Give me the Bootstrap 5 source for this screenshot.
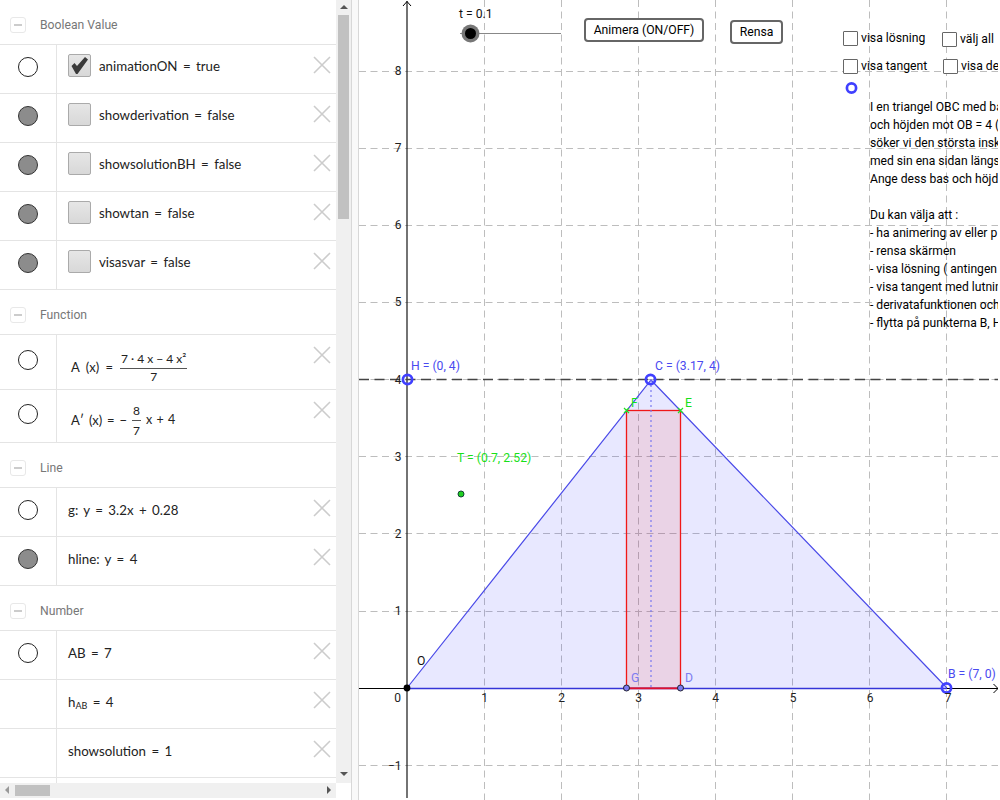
<!DOCTYPE html>
<html lang="sv">
<head>
<meta charset="utf-8">
<title>GeoGebra</title>
<link rel="stylesheet" href="https://cdn.jsdelivr.net/npm/bootstrap@5.3.0/dist/css/bootstrap.min.css">
<style>
html,body{height:800px;overflow:hidden;background:#fff;}
body{font-family:Roboto,"Liberation Sans",sans-serif;color:#000;}
.ggb-app{width:1000px;height:800px;}
.algebra-pane{width:351px;height:800px;flex:none;position:relative;}
.algebra-list{width:336px;height:783px;overflow:hidden;}
.group-head{height:45px;color:#777;font-size:12.2px;padding:6px 0 0 10px;gap:14px;border-bottom:1px solid #e4e4e4;}
.minus-box{width:16px;height:16px;border:1px solid #e8e8e8;border-radius:3px;position:relative;flex:none;}
.minus-box::after{content:"";position:absolute;left:3px;right:3px;top:6px;height:2px;background:#ccc;}
.alg-row{height:49px;border-bottom:1px solid #e4e4e4;}
.alg-row.tall-a{height:55px;}
.alg-row.tall-b{height:53px;}
.marble-cell{width:57px;flex:none;border-right:1px solid #e4e4e4;padding-top:12px;}
.tall-a .marble-cell{padding-top:15px;}
.tall-b .marble-cell{padding-top:14px;}
.marble{display:block;width:20px;height:20px;border-radius:50%;border:1px solid #222;margin-left:18px;background:#fff;}
.marble.on{background:#8c8c8c;border-color:#333;}
.expr{flex:1;padding-left:11px;font-size:13.3px;word-spacing:2px;color:#222;padding-top:9px;gap:8px;white-space:nowrap;position:relative;font-family:Lato,Roboto,sans-serif;}
.expr-text{margin-top:3px;}
.expr-plain{margin-top:4px;}
.tall-a .expr{padding-top:11px;gap:7px;}
.tall-b .expr{gap:5px;}
.fake-check{width:23px;height:23px;flex:none;border:1px solid #aaa;border-radius:2px;background:linear-gradient(#e6e6e6,#d8d8d8);}
.close-x{width:18px;height:18px;position:absolute;right:5px;top:11px;}
.math-text{font-size:13px;margin-left:3px;word-spacing:3px;}
.tall-b .math-text{word-spacing:1.5px;}
.math-tail{font-size:12.5px;word-spacing:1px;}
.frac{display:inline-flex;flex-direction:column;align-items:center;font-size:12px;line-height:16px;word-spacing:0;}
.frac-top{border-bottom:1px solid #555;padding:0 1px 1px;}
.tall-b .frac{line-height:19px;}
.tall-b .frac-top{line-height:18px;padding:0 1px;}
.expr sub{font-size:9px;}
.scroll-v{width:15px;height:783px;background:#f0f0f0;position:absolute;left:336px;top:0;}
.scroll-v-thumb{position:absolute;left:1.5px;right:2px;top:15px;height:204px;background:#c1c1c1;}
.scroll-h{width:336px;height:15px;background:#f0f0f0;position:absolute;left:0;top:783px;}
.scroll-h-thumb{position:absolute;left:15px;top:2px;width:35px;height:11px;background:#c1c1c1;}
.arrow-svg{position:absolute;}
.pane-split{width:8px;height:800px;flex:none;background:#f9f9f9;border-left:1px solid #d8d8d8;border-right:1px solid #d8d8d8;}
.graphics{width:639px;height:800px;flex:none;position:relative;overflow:hidden;}
.graphics svg.plot{position:absolute;left:-359px;top:0;}
.ggb-btn{position:absolute;background:#fff;border:2px solid #666;border-radius:4px;color:#000;font-size:12.2px;padding:0;line-height:20px;}
.ggb-check{position:absolute;font-size:12.2px;line-height:16px;white-space:nowrap;display:flex;gap:3px;align-items:center;}
.ggb-box{width:15px;height:15px;border:1.5px solid #666;border-radius:1px;background:#fff;flex:none;}
.ggb-note{position:absolute;left:511px;top:97.5px;font-size:12.1px;line-height:18px;white-space:pre;color:#000;}
</style>
</head>
<body>
<div class="ggb-app d-flex">
  <aside class="algebra-pane">
    <div class="algebra-list">
      <div class="group-head d-flex align-items-center"><span class="minus-box"></span><span>Boolean Value</span></div>
      <div class="alg-row d-flex"><div class="marble-cell"><span class="marble"></span></div><div class="expr d-flex align-items-start"><span class="fake-check d-flex align-items-center justify-content-center"><svg width="21" height="21" viewBox="1 1 21 21"><path d="M3.5 12 L6.5 9 L9 12 L17 3 L20 5.5 L9.5 20 L8 20Z" fill="#3a3a3a"/></svg></span><span class="expr-text">animationON = true</span><svg class="close-x" viewBox="0 0 18 18"><path d="M1 1L17 17M17 1L1 17" stroke="#ccc" stroke-width="1.6"/></svg></div></div>
      <div class="alg-row d-flex"><div class="marble-cell"><span class="marble on"></span></div><div class="expr d-flex align-items-start"><span class="fake-check"></span><span class="expr-text">showderivation = false</span><svg class="close-x" viewBox="0 0 18 18"><path d="M1 1L17 17M17 1L1 17" stroke="#ccc" stroke-width="1.6"/></svg></div></div>
      <div class="alg-row d-flex"><div class="marble-cell"><span class="marble on"></span></div><div class="expr d-flex align-items-start"><span class="fake-check"></span><span class="expr-text">showsolutionBH = false</span><svg class="close-x" viewBox="0 0 18 18"><path d="M1 1L17 17M17 1L1 17" stroke="#ccc" stroke-width="1.6"/></svg></div></div>
      <div class="alg-row d-flex"><div class="marble-cell"><span class="marble on"></span></div><div class="expr d-flex align-items-start"><span class="fake-check"></span><span class="expr-text">showtan = false</span><svg class="close-x" viewBox="0 0 18 18"><path d="M1 1L17 17M17 1L1 17" stroke="#ccc" stroke-width="1.6"/></svg></div></div>
      <div class="alg-row d-flex"><div class="marble-cell"><span class="marble on"></span></div><div class="expr d-flex align-items-start"><span class="fake-check"></span><span class="expr-text">visasvar = false</span><svg class="close-x" viewBox="0 0 18 18"><path d="M1 1L17 17M17 1L1 17" stroke="#ccc" stroke-width="1.6"/></svg></div></div>

      <div class="group-head d-flex align-items-center"><span class="minus-box"></span><span>Function</span></div>
      <div class="alg-row tall-a d-flex"><div class="marble-cell"><span class="marble"></span></div><div class="expr d-flex align-items-center"><span class="math-text">A (x) =</span><span class="frac"><span class="frac-top">7 · 4 x − 4 x²</span><span>7</span></span><svg class="close-x" viewBox="0 0 18 18"><path d="M1 1L17 17M17 1L1 17" stroke="#ccc" stroke-width="1.6"/></svg></div></div>
      <div class="alg-row tall-b d-flex"><div class="marble-cell"><span class="marble"></span></div><div class="expr d-flex align-items-center"><span class="math-text">A′ (x) = −</span><span class="frac"><span class="frac-top">8</span><span>7</span></span><span class="math-tail">x + 4</span><svg class="close-x" viewBox="0 0 18 18"><path d="M1 1L17 17M17 1L1 17" stroke="#ccc" stroke-width="1.6"/></svg></div></div>

      <div class="group-head d-flex align-items-center"><span class="minus-box"></span><span>Line</span></div>
      <div class="alg-row d-flex"><div class="marble-cell"><span class="marble"></span></div><div class="expr d-flex align-items-start"><span class="expr-plain">g: y = 3.2x + 0.28</span><svg class="close-x" viewBox="0 0 18 18"><path d="M1 1L17 17M17 1L1 17" stroke="#ccc" stroke-width="1.6"/></svg></div></div>
      <div class="alg-row d-flex"><div class="marble-cell"><span class="marble on"></span></div><div class="expr d-flex align-items-start"><span class="expr-plain">hline: y = 4</span><svg class="close-x" viewBox="0 0 18 18"><path d="M1 1L17 17M17 1L1 17" stroke="#ccc" stroke-width="1.6"/></svg></div></div>

      <div class="group-head d-flex align-items-center"><span class="minus-box"></span><span>Number</span></div>
      <div class="alg-row d-flex"><div class="marble-cell"><span class="marble"></span></div><div class="expr d-flex align-items-start"><span class="expr-plain">AB = 7</span><svg class="close-x" viewBox="0 0 18 18"><path d="M1 1L17 17M17 1L1 17" stroke="#ccc" stroke-width="1.6"/></svg></div></div>
      <div class="alg-row d-flex"><div class="marble-cell"></div><div class="expr d-flex align-items-start"><span class="expr-plain">h<sub>AB</sub> = 4</span><svg class="close-x" viewBox="0 0 18 18"><path d="M1 1L17 17M17 1L1 17" stroke="#ccc" stroke-width="1.6"/></svg></div></div>
      <div class="alg-row d-flex"><div class="marble-cell"></div><div class="expr d-flex align-items-start"><span class="expr-plain">showsolution = 1</span><svg class="close-x" viewBox="0 0 18 18"><path d="M1 1L17 17M17 1L1 17" stroke="#ccc" stroke-width="1.6"/></svg></div></div>
      <div class="alg-row d-flex"><div class="marble-cell"></div><div class="expr"></div></div>
    </div>
    <div class="scroll-v"><div class="scroll-v-thumb"></div>
      <svg class="arrow-svg" style="left:3px;top:4px" width="10" height="6"><path d="M5 1L9 5H1Z" fill="#555"/></svg>
      <svg class="arrow-svg" style="left:3px;top:771px" width="10" height="6"><path d="M5 5L9 1H1Z" fill="#555"/></svg>
    </div>
    <div class="scroll-h"><div class="scroll-h-thumb"></div>
      <svg class="arrow-svg" style="left:4px;top:2px" width="6" height="10"><path d="M1 5L5 1V9Z" fill="#999"/></svg>
      <svg class="arrow-svg" style="left:326px;top:2px" width="6" height="10"><path d="M5 5L1 1V9Z" fill="#555"/></svg>
    </div>
  </aside>
  <div class="pane-split"></div>
  <main class="graphics">
    <svg class="plot" width="998" height="800" viewBox="0 0 998 800" font-family="Roboto,sans-serif" font-size="12.2">
      <g stroke="#bdbdbd" stroke-width="1" stroke-dasharray="7 4.5" fill="none">
        <path d="M484.5 0V800M561.5 0V800M638.5 0V800M715.5 0V800M792.5 0V800M869.5 0V800M946.5 0V800"/>
        <path d="M359 71.5H998M359 148.5H998M359 225.5H998M359 302.5H998M359 379.5H998M359 456.5H998M359 533.5H998M359 611.5H998M359 765.5H998"/>
      </g>
      <polygon points="407,688 651,380 947,688" fill="#4040ff" fill-opacity=".12"/>
      <rect x="626.5" y="410.5" width="54" height="277.5" fill="#ff2005" fill-opacity=".1" stroke="#f01818" stroke-width="1.3"/>
      <path d="M359 688.5H998" stroke="#000"/>
      <path d="M407 798V1" stroke="#000" stroke-width="1.1"/>
      <path d="M403 6L407 1.5L411 6M993.5 684L998 688.5L993.5 693" stroke="#000" fill="none"/>
      <path d="M359 379.5H998" stroke="#444" stroke-width="1.3" stroke-dasharray="10 5.5"/>
      <path d="M407 688L651 380L947 688" fill="none" stroke="#4a4ae8" stroke-width="1.2"/>
      <path d="M407 688.5H947" stroke="#3535d8" stroke-width="1.6"/>
      <path d="M627 688.5H680" stroke="#e01030" stroke-width="1.6"/>
      <path d="M651 380V688" stroke="#7878f0" stroke-width="1.2" stroke-dasharray="2 3"/>
      <path d="M460 33.5H561" stroke="#888"/>
      <circle cx="470.5" cy="33.5" r="9" fill="#777"/>
      <circle cx="470.5" cy="33.5" r="5.5" fill="#000"/>
      <g fill="none" stroke="#4040ff" stroke-width="2.7">
        <circle cx="407.5" cy="379.5" r="4.6"/><circle cx="650.5" cy="379.5" r="4.6"/><circle cx="946.5" cy="688" r="4.6"/><circle cx="851.5" cy="88" r="4.6"/>
      </g>
      <circle cx="407" cy="688" r="3.4" fill="#000"/>
      <g fill="#7c7cf0" stroke="#223" stroke-width="1"><circle cx="626.5" cy="688" r="3"/><circle cx="680.5" cy="688" r="3"/></g>
      <circle cx="461" cy="494" r="3" fill="#20d020" stroke="#143" stroke-width="1"/>
      <g stroke="#20e020" stroke-width="1.2"><path d="M624 408L629 413M629 408L624 413M678 408L683 413M683 408L678 413"/></g>
      <g fill="#222" text-anchor="middle" font-size="12">
        <text x="397.5" y="702">0</text><text x="484.5" y="702">1</text><text x="561.5" y="702">2</text><text x="638.5" y="702">3</text><text x="715.5" y="702">4</text><text x="793" y="702">5</text><text x="870" y="702">6</text><text x="948" y="702">7</text>
      </g>
      <g fill="#222" text-anchor="end" font-size="12">
        <text x="401.5" y="75">8</text><text x="401.5" y="152">7</text><text x="401.5" y="229">6</text><text x="401.5" y="306">5</text><text x="401.5" y="384">4</text><text x="401.5" y="461">3</text><text x="401.5" y="538">2</text><text x="401.5" y="615">1</text><text x="401.5" y="770">−1</text>
      </g>
      <g fill="#4a4af0">
        <text x="411" y="370">H = (0, 4)</text><text x="655" y="370">C = (3.17, 4)</text><text x="948" y="678">B = (7, 0)</text>
      </g>
      <g fill="#7c7cf0"><text x="631" y="682">G</text><text x="685" y="682">D</text></g>
      <g fill="#18e018"><text x="457" y="462">T = (0.7, 2.52)</text><text x="631" y="407">F</text><text x="685" y="407">E</text></g>
      <text x="417" y="665" fill="#111">O</text>
      <text x="459" y="18" fill="#111">t = 0.1</text>
    </svg>
    <button type="button" class="btn ggb-btn" style="left:225px;top:18px;width:120px;height:24px">Animera (ON/OFF)</button>
    <button type="button" class="btn ggb-btn" style="left:371px;top:20px;width:53px;height:24px">Rensa</button>
    <div class="ggb-check" style="left:484px;top:30px"><span class="ggb-box"></span><span>visa lösning</span></div>
    <div class="ggb-check" style="left:583px;top:31px"><span class="ggb-box"></span><span>välj all</span></div>
    <div class="ggb-check" style="left:484px;top:58px"><span class="ggb-box"></span><span>visa tangent</span></div>
    <div class="ggb-check" style="left:584px;top:58px"><span class="ggb-box"></span><span>visa de</span></div>
    <div class="ggb-note">I en triangel OBC med ba
och höjden mot OB = 4 (
söker vi den största insk
med sin ena sidan längs
Ange dess bas och höjd

Du kan välja att :
- ha animering av eller p
- rensa skärmen
- visa lösning ( antingen
- visa tangent med lutnin
- derivatafunktionen och
- flytta på punkterna B, H</div>
  </main>
</div>
<script src="https://cdn.jsdelivr.net/npm/bootstrap@5.3.0/dist/js/bootstrap.bundle.min.js"></script>
</body>
</html>
